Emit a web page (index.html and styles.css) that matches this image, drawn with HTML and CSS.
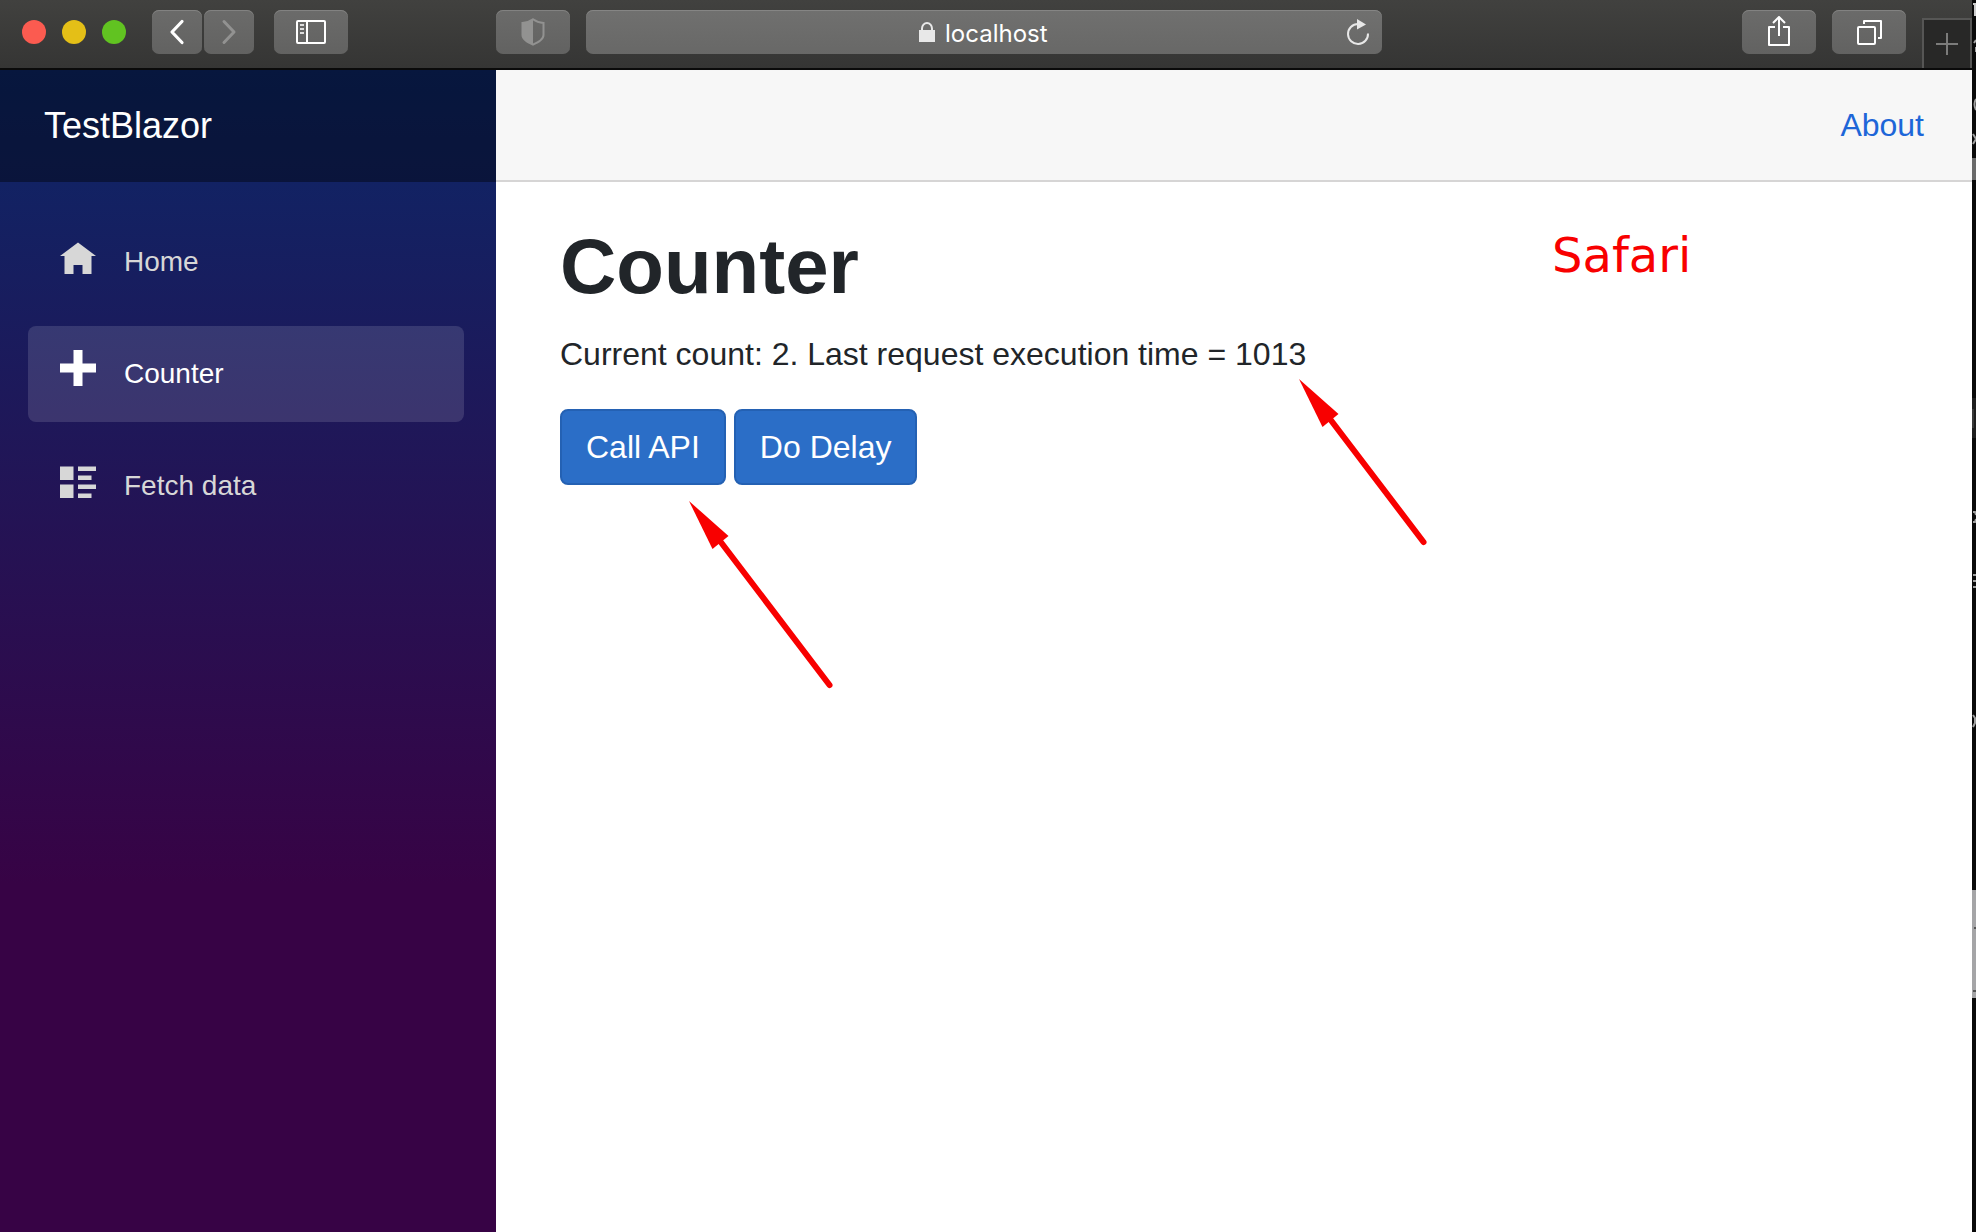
FILE: index.html
```html
<!DOCTYPE html>
<html lang="en">
<head>
<meta charset="utf-8">
<meta name="viewport" content="width=device-width, initial-scale=1">
<title>TestBlazor</title>
<link rel="stylesheet" href="styles.css">
</head>
<body>
<div class="desktop">
  <div class="window">
    <header class="toolbar">
      <div class="toolbar-left">
        <div class="lights">
          <span class="light light-close"></span>
          <span class="light light-min"></span>
          <span class="light light-max"></span>
        </div>
        <div class="nav-buttons">
          <button class="tool tool-narrow" type="button" aria-label="Back">
            <svg width="16" height="26" viewBox="0 0 16 26"><path d="M13 2.500L3 13l10 10.500" fill="none" stroke="#fff" stroke-width="3.200" stroke-linecap="round" stroke-linejoin="round"/></svg>
          </button>
          <button class="tool tool-narrow" type="button" aria-label="Forward">
            <svg width="16" height="26" viewBox="0 0 16 26"><path d="M3 2.500L13 13 3 23.500" fill="none" stroke="#929291" stroke-width="3" stroke-linecap="round" stroke-linejoin="round"/></svg>
          </button>
        </div>
        <button class="tool" type="button" aria-label="Sidebar">
          <svg width="30" height="24" viewBox="0 0 30 24" fill="none" stroke="#fff" stroke-width="2"><rect x="1" y="1" width="28" height="22" rx="1"/><path d="M11 1v22"/><path d="M4 5h4M4 9h4M4 13h4" stroke="#ddd"/></svg>
        </button>
      </div>
      <button class="tool" type="button" aria-label="Privacy report">
        <svg width="24" height="28" viewBox="0 0 24 28"><path d="M12 1.300C9 3.500 5.500 4.700 1.500 5v12c0 4.500 5 7 10.500 9.700C17.500 24 22.500 21.500 22.500 17V5C18.500 4.700 15 3.500 12 1.300z" fill="none" stroke="#929291" stroke-width="2"/><path d="M12 1.300C9 3.500 5.500 4.700 1.500 5v12c0 4.500 5 7 10.500 9.700z" fill="#929291"/></svg>
      </button>
      <div class="address">
        <label class="address-text">
          <svg width="16" height="20" viewBox="0 0 16 20" aria-label="Secure"><path d="M0 8h16v12H0z" fill="#e8e8e8"/><path d="M3 9V6.500a5 5.500 0 0 1 10 0V9" fill="none" stroke="#e8e8e8" stroke-width="2"/></svg>
          <input class="address-input" type="text" value="localhost" aria-label="Address">
        </label>
        <button class="reload" type="button" aria-label="Reload">
          <svg width="24" height="28" viewBox="0 0 24 28"><path d="M22 15.500A10 10 0 1 1 12 6" fill="none" stroke="#e8e8e8" stroke-width="2"/><path d="M11 1l9 5.500-9 5z" fill="#e8e8e8"/></svg>
        </button>
      </div>
      <div class="toolbar-right">
        <button class="tool" type="button" aria-label="Share">
          <svg width="24" height="32" viewBox="0 0 24 32" fill="none" stroke="#fff" stroke-width="2" stroke-linejoin="round"><path d="M8 11H2v18h20V11h-6"/><path d="M12 20V1M6 7l6-6 6 6"/></svg>
        </button>
        <button class="tool" type="button" aria-label="Show tabs">
          <svg width="26" height="26" viewBox="0 0 26 26" fill="none" stroke="#fff" stroke-width="2" stroke-linejoin="round"><rect x="2" y="8" width="17" height="17" rx="1"/><path d="M8 5V2h17v17h-3"/></svg>
        </button>
        <button class="new-tab" type="button" aria-label="New tab">
          <svg width="22" height="22" viewBox="0 0 22 22"><path d="M11 0v22M0 11h22" stroke="#7c7c7b" stroke-width="2"/></svg>
        </button>
      </div>
    </header>
    <div class="page">
      <aside class="sidebar">
        <div class="brand-row"><a class="brand" href="#">TestBlazor</a></div>
        <nav class="menu">
          <a class="menu-link" href="#">
            <svg class="menu-icon" viewBox="0 0 8 8"><path d="M4 1L0 4h1v4h2V6h2v2h2V4h1z"/></svg>
            <span>Home</span>
          </a>
          <a class="menu-link active" href="#">
            <svg class="menu-icon" viewBox="0 0 8 8"><path d="M3 0v3H0v2h3v3h2V5h3V3H5V0z"/></svg>
            <span>Counter</span>
          </a>
          <a class="menu-link" href="#">
            <svg class="menu-icon" viewBox="0 0 8 8"><path d="M0 1v3h3V1zM4 1v1h4V1zM4 3v1h3V3zM0 5v3h3V5zM4 5v1h4V5zM4 7v1h3V7z"/></svg>
            <span>Fetch data</span>
          </a>
        </nav>
      </aside>
      <main class="main">
        <div class="top-row"><a class="about" href="#">About</a></div>
        <div class="content">
          <h1 class="title">Counter</h1>
          <p class="status">Current count: 2. Last request execution time = 1013</p>
          <div class="actions">
            <button class="btn" type="button">Call API</button>
            <button class="btn" type="button">Do Delay</button>
          </div>
        </div>
        <span class="note">Safari</span>
        <svg class="arrow arrow-api" width="144" height="188" viewBox="0 0 144 188"><path class="arrow-head" d="M0 0l39.500 35L23.500 48z"/><path class="arrow-shaft" d="M31 40l109.500 144"/></svg>
        <svg class="arrow arrow-time" width="128" height="168" viewBox="0 0 128 168"><path class="arrow-head" d="M0 0l39.500 35L23.500 48z"/><path class="arrow-shaft" d="M31 40l93.500 123"/></svg>
      </main>
    </div>
  </div>
  <div class="backdrop">
    <svg width="4" height="1060" viewBox="0 0 4 1060" fill="none" stroke="#a0a0a0" stroke-width="2">
      <path d="M3 3v13M1 4h3" stroke="#ccc"/>
      <path d="M4 40l-2 3M4 47v5M4 99q-3 5 0 11M1 134l3 5-3 5"/>
      <path d="M2 158v22" stroke="#6a6a6a" stroke-width="4"/>
      <path d="M2 398v40" stroke="#1e1e1e" stroke-width="4"/>
      <path d="M1 409v19" stroke="#555" stroke-width="1"/>
      <path d="M1 512h2l1 3M1 522h2l1-3M1 575h3M1 581h3M1 587h3M1 715l2 3v5l-2 4"/>
      <path d="M2 890v108" stroke="#a5a5a7" stroke-width="4"/>
      <path d="M2 928h2M1 991h3" stroke="#555"/>
    </svg>
  </div>
</div>
</body>
</html>
```
FILE: styles.css
```css
* {
  box-sizing: border-box;
}

body {
  margin: 0;
  font-family: "Liberation Sans", Arial, sans-serif;
  font-size: 32px;
  line-height: 48px;
  color: #212529;
}

button,
input {
  font: inherit;
  color: inherit;
  border: 0;
  padding: 0;
  margin: 0;
}

a {
  text-decoration: none;
}

svg {
  display: block;
  flex: none;
}

.desktop {
  display: flex;
  min-height: 100vh;
  background: #0a0a0a;
}

.window {
  flex: 1;
  min-width: 0;
  display: flex;
  flex-direction: column;
}

.backdrop {
  width: 4px;
}

/* Browser toolbar */

.toolbar {
  display: flex;
  height: 70px;
  padding-top: 10px;
  background: linear-gradient(#41413f, #353534);
  border-bottom: 2px solid #0a0a0a;
}

.toolbar-left {
  display: flex;
  width: 496px;
  padding-left: 22px;
}

.lights {
  display: flex;
  align-items: center;
  gap: 16px;
  height: 44px;
  margin-right: 26px;
}

.light {
  width: 24px;
  height: 24px;
  border-radius: 50%;
}

.light-close {
  background: #fb5b50;
}

.light-min {
  background: #e4bf17;
}

.light-max {
  background: #61c321;
}

.nav-buttons {
  display: flex;
  gap: 2px;
  margin-right: 20px;
}

.tool {
  display: flex;
  align-items: center;
  justify-content: center;
  width: 74px;
  height: 44px;
  flex: none;
  border-radius: 7px;
  background: linear-gradient(#6b6b6a, #626261);
  box-shadow: inset 0 1px 0 #828281;
}

.tool-narrow {
  width: 50px;
}

.address {
  display: grid;
  grid-template-columns: 1fr auto 1fr;
  align-items: center;
  flex: 0 1 796px;
  height: 44px;
  margin-left: 16px;
  padding-right: 12px;
  border-radius: 7px;
  background: linear-gradient(#70706f, #686867);
  box-shadow: inset 0 1px 0 #858584;
}

.address-text {
  grid-column: 2;
  display: flex;
  align-items: center;
  gap: 10px;
  padding-left: 12px;
}

.address-input {
  width: 104px;
  height: 34px;
  padding-top: 2px;
  background: transparent;
  color: #fff;
  font-family: Inter, sans-serif;
  font-size: 24px;
  line-height: 32px;
}

.reload {
  justify-self: end;
  background: transparent;
}

.toolbar-right {
  display: flex;
  gap: 16px;
  margin-left: auto;
}

.new-tab {
  display: flex;
  align-items: center;
  justify-content: center;
  width: 50px;
  margin-top: 8px;
  background: #282827;
  border: solid #565655;
  border-width: 2px 2px 0;
}

/* Application */

.page {
  flex: 1;
  display: flex;
}

.sidebar {
  width: 496px;
  flex: none;
  background: linear-gradient(180deg, #0c2768 0%, #370345 70%);
}

.brand-row {
  display: flex;
  align-items: center;
  height: 112px;
  padding: 0 44px;
  background: rgba(0, 0, 0, 0.4);
}

.brand {
  color: #fff;
  font-size: 36px;
}

.menu {
  display: flex;
  flex-direction: column;
  gap: 16px;
  padding: 32px 32px 32px 28px;
}

.menu-link {
  display: flex;
  align-items: center;
  gap: 28px;
  height: 96px;
  padding: 0 32px;
  border-radius: 8px;
  color: #d7d7d7;
  font-size: 28px;
}

.menu-link.active {
  background: rgba(255, 255, 255, 0.13);
  color: #fff;
}

.menu-icon {
  width: 36px;
  height: 36px;
  margin-bottom: 12px;
  fill: currentColor;
}

.main {
  position: relative;
  flex: 1;
  min-width: 0;
  background: #fff;
}

.top-row {
  display: flex;
  align-items: center;
  justify-content: flex-end;
  height: 112px;
  padding: 0 48px;
  background: #f7f7f7;
  border-bottom: 2px solid #d6d5d5;
}

.about {
  color: #1d66d8;
}

.content {
  padding: 36px 64px;
}

.title {
  margin: 0 0 16px;
  font-size: 78px;
  font-weight: 700;
  line-height: 96px;
}

.status {
  margin: 0 0 31px;
}

.actions {
  display: flex;
  gap: 8px;
}

.btn {
  height: 76px;
  padding: 0 24px;
  border: 2px solid #2461b3;
  border-radius: 8px;
  background: #2b6ec7;
  color: #fff;
}

/* Annotations drawn over the page */

.note {
  position: absolute;
  top: 157px;
  left: 1056px;
  color: #f80000;
  font-family: "DejaVu Sans", Verdana, sans-serif;
  font-size: 48px;
  line-height: 56px;
}

.arrow {
  position: absolute;
}

.arrow-api {
  top: 431px;
  left: 193px;
}

.arrow-time {
  top: 309px;
  left: 803px;
}

.arrow-head {
  fill: #f80000;
}

.arrow-shaft {
  fill: none;
  stroke: #f80000;
  stroke-width: 6px;
  stroke-linecap: round;
}
```
